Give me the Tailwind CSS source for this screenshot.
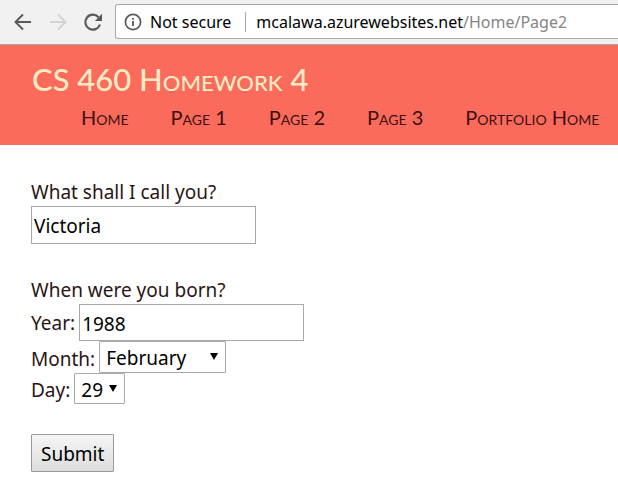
<!DOCTYPE html>
<html lang="en">
<head>
<meta charset="utf-8">
<meta name="viewport" content="width=device-width, initial-scale=1">
<title>CS 460 Homework 4</title>
<script src="https://cdn.jsdelivr.net/npm/@tailwindcss/browser@4"></script>
</head>
<body class="min-h-screen overflow-x-hidden bg-white font-['Noto_Sans',sans-serif] text-[19px] text-[#2b1414]">

<!-- Browser toolbar -->
<div class="flex h-[45px] items-center border-b border-[#a9a9a9] bg-[#f1f1f1] pb-px pl-3">
  <button type="button" aria-label="Back" class="mr-3 size-[22px]">
    <svg viewBox="0 0 22 22" class="size-full" fill="none" stroke="#5a5a5a" stroke-width="2"><path d="M19 11H4.500M11 3.500L3.500 11l7.500 7.500"/></svg>
  </button>
  <button type="button" aria-label="Forward" disabled class="mr-3 size-[22px]">
    <svg viewBox="0 0 22 22" class="size-full" fill="none" stroke="#d3d3d3" stroke-width="2"><path d="M4 11h14.500M12 3.500l7.500 7.500-7.500 7.500"/></svg>
  </button>
  <button type="button" aria-label="Reload" class="mr-[13px] size-[22px]">
    <svg viewBox="0 0 22 22" class="size-full"><path d="M20 13.500A7.500 7.500 0 1 1 18.500 6.200" fill="none" stroke="#5a5a5a" stroke-width="2.200"/><path d="M22 2.800v7.200h-7.200z" fill="#5a5a5a"/></svg>
  </button>
  <div class="flex h-[35px] min-w-0 grow items-center rounded-l-[3px] border border-r-0 border-[#a9a9a9] bg-white pl-2 text-base whitespace-nowrap text-black">
    <svg viewBox="0 0 18 18" class="mr-2 size-[18px] shrink-0" aria-hidden="true"><circle cx="9" cy="9" r="7.600" fill="none" stroke="#5a5a5a" stroke-width="1.700"/><path d="M8.100 8h1.800v5H8.100zM8.100 5h1.800v1.800H8.100z" fill="#5a5a5a"/></svg>
    <span>Not secure</span>
    <span class="mr-2.5 ml-3.5 h-5 w-px shrink-0 bg-[#a9a9a9]"></span>
    <span>mcalawa.azurewebsites.net<span class="text-[#858585]">/Home/Page2</span></span>
  </div>
</div>

<header class="bg-[#fa6b5c] py-3 pl-8 font-['Lato',sans-serif] [font-variant-caps:small-caps]">
  <h1 class="text-[31px] leading-[44px] font-medium text-[#ffeac4]">CS 460 Homework 4</h1>
  <nav class="flex gap-[42px] pl-[49px] text-xl leading-8 whitespace-nowrap text-[#3d1013]">
    <a href="#home">Home</a>
    <a href="#page1">Page 1</a>
    <a href="#page2">Page 2</a>
    <a href="#page3">Page 3</a>
    <a href="#portfolio">Portfolio Home</a>
  </nav>
</header>

<main class="px-[31px] pt-[33px] pb-5">
  <form class="flex flex-col items-start leading-7">
    <label for="name">What shall I call you?</label>
    <input id="name" type="text" value="Victoria" class="mb-8 h-[38px] w-[225px] border border-[#a9a9a9] px-0.5 pt-0.5 text-black">

    <p>When were you born?</p>
    <div class="flex items-center gap-1">
      <label for="year">Year:</label>
      <input id="year" type="text" value="1988" class="h-[37px] w-[225px] border border-[#a9a9a9] px-0.5 pt-0.5 text-black">
    </div>
    <div class="flex items-center gap-1">
      <label for="month" class="pt-1">Month:</label>
      <span class="relative">
        <select id="month" class="block h-8 w-[127px] appearance-none rounded-[1px] border border-[#a9a9a9] bg-white pt-0.5 pl-1.5 text-black">
          <option>January</option><option selected>February</option><option>March</option><option>April</option><option>May</option><option>June</option><option>July</option><option>August</option><option>September</option><option>October</option><option>November</option><option>December</option>
        </select>
        <svg viewBox="0 0 8 7" class="pointer-events-none absolute top-3 right-2 h-[7px] w-2" aria-hidden="true"><path d="M0 0h8L4 7z"/></svg>
      </span>
    </div>
    <div class="mb-[30px] flex items-center gap-1">
      <label for="day" class="pt-0.5">Day:</label>
      <span class="relative">
        <select id="day" class="block h-[31px] w-[51px] appearance-none rounded-[1px] border border-[#a9a9a9] bg-white pt-0.5 pl-1.5 text-black">
          <option>28</option><option selected>29</option>
        </select>
        <svg viewBox="0 0 8 7" class="pointer-events-none absolute top-3 right-2 h-[7px] w-2" aria-hidden="true"><path d="M0 0h8L4 7z"/></svg>
      </span>
    </div>
    <button type="submit" class="h-[38px] rounded-[1px] border border-[#999999] bg-linear-to-b from-[#f6f6f6] to-[#dddddd] px-[9px] pt-0.5 text-black">Submit</button>
  </form>
</main>
</body>
</html>
